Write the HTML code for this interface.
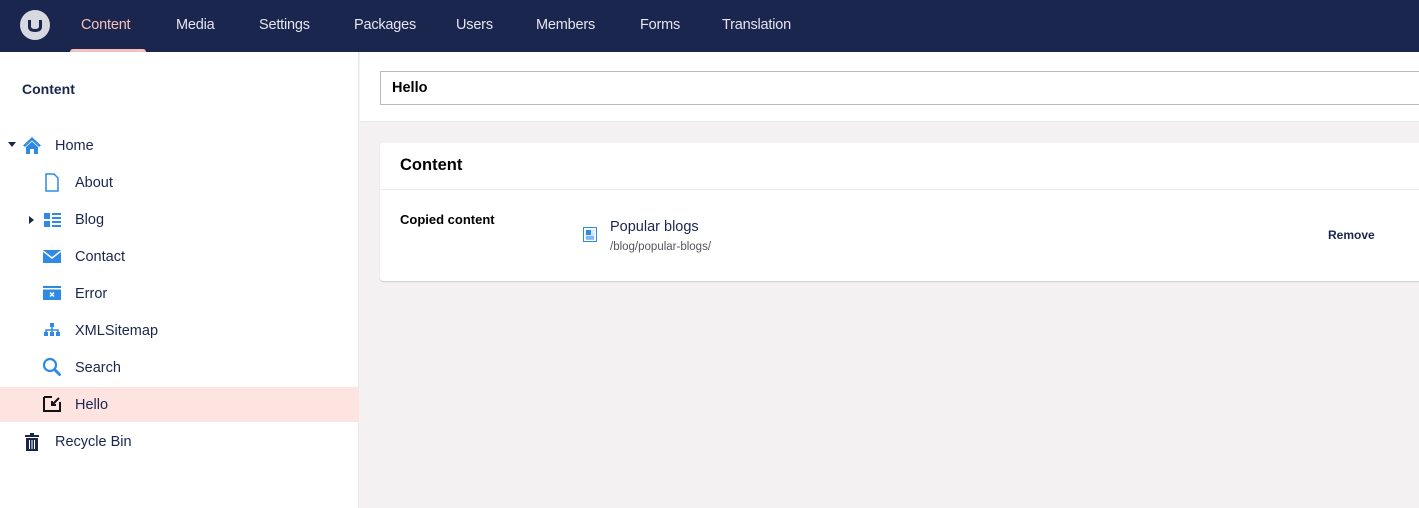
<!DOCTYPE html>
<html><head><meta charset="utf-8"><style>
*{box-sizing:border-box;margin:0;padding:0}
body{width:1419px;height:508px;overflow:hidden;font-family:"Liberation Sans",sans-serif;background:#f3f1f1;position:relative;color:#1b264f}
.top{position:absolute;left:0;top:0;width:1419px;height:52px;background:#1b264f}
.nav{position:absolute;top:17px;font-size:14.5px;color:#e4e5ee;white-space:nowrap;letter-spacing:-0.2px}
.nav.act{color:#f5c1bc}
.ul{position:absolute;left:70px;top:49px;width:76px;height:4px;background:#f5c1bc;border-radius:3px 3px 0 0}
.side{position:absolute;left:0;top:52px;width:359px;height:456px;background:#fff;border-right:1px solid #e9e9eb}
.sh{position:absolute;left:22px;top:29px;font-size:14px;font-weight:bold;color:#1b264f}
.row{position:absolute;left:0;width:359px;height:36px}
.row span{position:absolute;top:11px;font-size:14.5px;color:#1b264f}
.row svg{position:absolute}
.hl{background:#fee4e1}
.hdr{position:absolute;left:360px;top:52px;width:1059px;height:70px;background:#fff;border-bottom:1px solid #e9e9eb}
.inp{position:absolute;left:20px;top:19px;width:1060px;height:34px;border:1px solid #bbbabf;font-size:14.5px;font-weight:bold;color:#000;padding:8px 11px}
.card{position:absolute;left:380px;top:143px;width:1060px;height:138px;background:#fff;border-radius:3px;box-shadow:0 1px 1px rgba(0,0,0,.15)}
.ct{position:absolute;left:20px;top:13px;font-size:16.5px;font-weight:bold;color:#000}
.cl{position:absolute;left:0;top:46px;width:100%;height:1px;background:#e9e9eb}
</style></head><body>
<div class="top">
<svg style="position:absolute;left:20px;top:10px" width="30" height="30" viewBox="0 0 30 30"><circle cx="15" cy="15" r="15" fill="#d8d8e0"/><path d="M9.5 10v6.5q0 4 5.5 4t5.5-4V10" fill="none" stroke="#1b264f" stroke-width="3"/></svg>
<div class="nav act" style="left:81px">Content</div>
<div class="nav" style="left:176px">Media</div>
<div class="nav" style="left:259px">Settings</div>
<div class="nav" style="left:354px">Packages</div>
<div class="nav" style="left:456px">Users</div>
<div class="nav" style="left:536px">Members</div>
<div class="nav" style="left:640px">Forms</div>
<div class="nav" style="left:722px">Translation</div>
<div class="ul"></div>
</div>
<div class="side">
<div class="sh">Content</div>
<div class="row" style="top:75px">
<svg style="left:8px;top:15px" width="8" height="6"><path d="M0 0h8L4 5z" fill="#1b264f"/></svg>
<svg style="left:22px;top:9px" width="20" height="18" viewBox="0 0 20 18"><path d="M10 1L1 9.5l2 1.5 7-6.5 7 6.5 2-1.5z M4 11l6-5.5 6 5.5v7h-4v-5H8v5H4z" fill="#2f8ae6"/></svg>
<span style="left:55px">Home</span></div>
<div class="row" style="top:112px">
<svg style="left:45px;top:9px" width="14" height="19" viewBox="0 0 14 19"><path d="M1 1h8l4 4v13H1z" fill="none" stroke="#2f8ae6" stroke-width="1.5"/></svg>
<span style="left:75px">About</span></div>
<div class="row" style="top:149px">
<svg style="left:29px;top:15px" width="6" height="8"><path d="M0 0v8l5-4z" fill="#1b264f"/></svg>
<svg style="left:44px;top:12px" width="17" height="14"><rect x="0" y="0" width="6" height="6" fill="#2f8ae6"/><rect x="0" y="8" width="6" height="6" fill="#2f8ae6"/><rect x="8" y="0" width="9" height="2" fill="#2f8ae6"/><rect x="8" y="4" width="9" height="2" fill="#2f8ae6"/><rect x="8" y="8" width="9" height="2" fill="#2f8ae6"/><rect x="8" y="12" width="9" height="2" fill="#2f8ae6"/></svg>
<span style="left:75px">Blog</span></div>
<div class="row" style="top:186px">
<svg style="left:43px;top:12px" width="18" height="13"><rect width="18" height="13" fill="#2f8ae6"/><path d="M0 1l9 7 9-7" fill="none" stroke="#fff" stroke-width="1.5"/></svg>
<span style="left:75px">Contact</span></div>
<div class="row" style="top:223px">
<svg style="left:43px;top:11px" width="18" height="14"><rect width="18" height="14" fill="#2f8ae6"/><rect x="0" y="2" width="18" height="1.5" fill="#fff"/><path d="M7 6.5l4 4M11 6.5l-4 4" stroke="#fff" stroke-width="1.5"/></svg>
<span style="left:75px">Error</span></div>
<div class="row" style="top:260px">
<svg style="left:43px;top:11px" width="18" height="14"><rect x="7" y="0" width="4" height="4" fill="#2f8ae6"/><path d="M9 4v3M3 10V7h12v3M9 7v3" stroke="#2f8ae6" stroke-width="1.5" fill="none"/><rect x="1" y="9" width="4" height="4" fill="#2f8ae6"/><rect x="7" y="9" width="4" height="4" fill="#2f8ae6"/><rect x="13" y="9" width="4" height="4" fill="#2f8ae6"/></svg>
<span style="left:75px">XMLSitemap</span></div>
<div class="row" style="top:297px">
<svg style="left:42px;top:8px" width="20" height="20"><circle cx="8" cy="8" r="6" fill="none" stroke="#2f8ae6" stroke-width="2.2"/><path d="M12.5 12.5l5 5" stroke="#2f8ae6" stroke-width="3" stroke-linecap="round"/></svg>
<span style="left:75px">Search</span></div>
<div class="row hl" style="top:335px;height:35px">
<svg style="left:43px;top:9px" width="18" height="16"><path d="M1 1v14h16V6M9 1h-8" fill="none" stroke="#111" stroke-width="2"/><path d="M16 2l-6 6M9 5v4h4" fill="none" stroke="#111" stroke-width="2"/></svg>
<span style="left:75px;top:10px">Hello</span></div>
<div class="row" style="top:371px">
<svg style="left:25px;top:10px" width="14" height="18"><rect x="0" y="2" width="14" height="2" fill="#1b264f"/><rect x="5" y="0" width="4" height="2" fill="#1b264f"/><rect x="1" y="5" width="12" height="13" fill="#1b264f"/><path d="M4.5 7v9M7 7v9M9.5 7v9" stroke="#fff" stroke-width="1"/></svg>
<span style="left:55px">Recycle Bin</span></div>
</div>
<div class="hdr"><div class="inp">Hello</div></div>
<div class="card">
<div class="ct">Content</div>
<div class="cl"></div>
<div style="position:absolute;left:20px;top:69px;font-size:13px;font-weight:bold;color:#000">Copied content</div>
<svg style="position:absolute;left:203px;top:84px" width="14" height="15"><rect x=".5" y=".5" width="13" height="14" fill="#fff" stroke="#2f8ae6"/><rect x="2.5" y="2.5" width="9" height="10" fill="#d4e7fb"/><rect x="3" y="3" width="5" height="5" fill="#2f8ae6"/><path d="M3 10h8M3 12h8" stroke="#2f8ae6"/></svg>
<div style="position:absolute;left:230px;top:76px;font-size:14.5px;color:#1b264f">Popular blogs</div>
<div style="position:absolute;left:230px;top:98px;font-size:11.5px;color:#55565e">/blog/popular-blogs/</div>
<div style="position:absolute;left:948px;top:85px;font-size:12px;font-weight:bold;color:#1b264f">Remove</div>
</div>
</body></html>
